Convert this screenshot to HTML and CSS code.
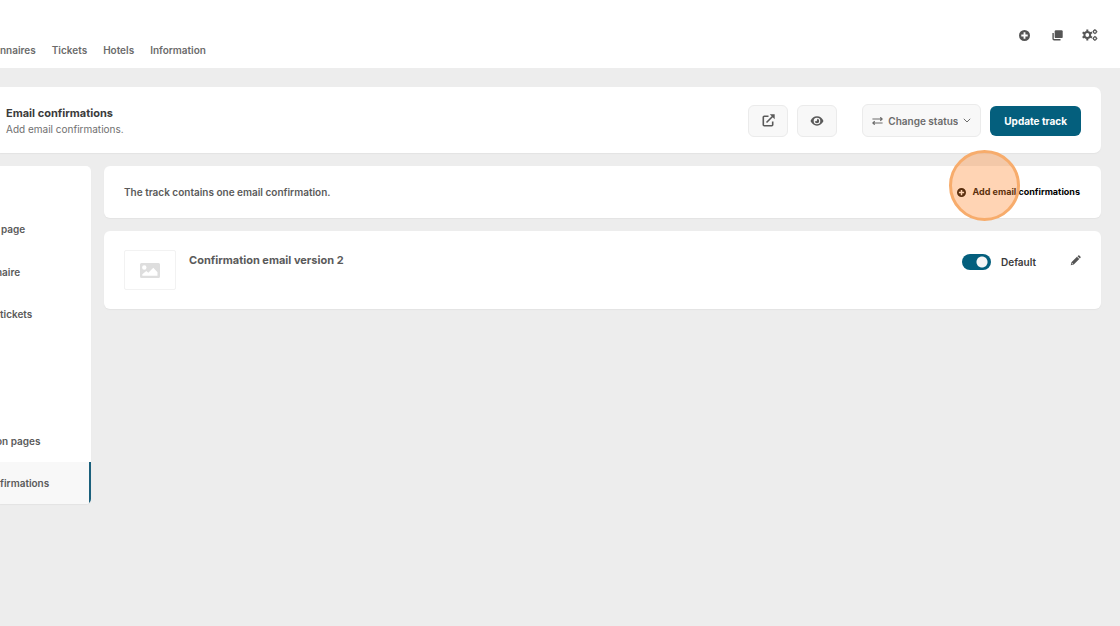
FILE: index.html
```html
<!DOCTYPE html>
<html lang="en">
<head>
<meta charset="utf-8">
<meta name="viewport" content="width=device-width, initial-scale=1">
<title>Email confirmations</title>
<link rel="stylesheet" href="styles.css">
</head>
<body>
<header class="topbar">
  <nav class="topnav" aria-label="Main">
    <a href="#">nnaires</a>
    <a href="#">Tickets</a>
    <a href="#">Hotels</a>
    <a href="#">Information</a>
  </nav>
  <div class="tools">
    <button class="icon-button" type="button" aria-label="Add">
      <svg width="11" height="11" viewBox="0 0 12 12"><path fill="currentColor" fill-rule="evenodd" d="M6 0a6 6 0 1 1 0 12A6 6 0 0 1 6 0ZM5 2.500V5H2.500v2H5v2.500h2V7h2.500V5H7V2.500Z"/></svg>
    </button>
    <button class="icon-button" type="button" aria-label="Copies">
      <svg width="11" height="11" viewBox="0 0 11 11"><rect x="2.700" y="0.300" width="8" height="7.800" rx="1.200" fill="currentColor"/><path d="M1.100 3v5.800q0 1 1 1H8.500" fill="none" stroke="currentColor" stroke-width="1.400"/></svg>
    </button>
    <button class="icon-button" type="button" aria-label="Settings">
      <svg width="16" height="12" viewBox="0 0 16 12"><g fill="none" stroke="currentColor"><circle cx="5.300" cy="6" r="2.900" stroke-width="2"/><path stroke-width="2" d="M5.300.6v2M5.300 9.400v2M.6 3.300l1.800 1M8.200 7.700l1.800 1M.6 8.700l1.800-1M8.200 4.300l1.800-1"/><circle cx="12.900" cy="2.700" r="1.500" stroke-width="1.300"/><circle cx="12.900" cy="9.400" r="1.500" stroke-width="1.300"/><path stroke-width="1" d="M12.900.2v1M12.900 4.200v1M10.600 2.700h1M14.400 2.700h1M12.900 6.900v1M12.900 10.900v1M10.600 9.400h1M14.400 9.400h1"/></g></svg>
    </button>
  </div>
</header>

<section class="page-head">
  <div>
    <h1 class="page-title">Email confirmations</h1>
    <p class="page-text">Add email confirmations.</p>
  </div>
  <div class="actions">
    <button class="square-button" type="button" aria-label="Open in new window">
      <svg width="13" height="13" viewBox="0 0 13 13"><g fill="none" stroke="currentColor" stroke-width="1.600"><path d="M6.500 2.300H2.300q-1 0-1 1v7.400q0 1 1 1h7.400q1 0 1-1V7.500"/><path d="M4.500 8.500l6.500-6.500"/></g><path fill="currentColor" d="M7.800.3h4.900v4.900Z"/></svg>
    </button>
    <button class="square-button" type="button" aria-label="Preview">
      <svg width="14" height="10" viewBox="0 0 14 10"><path fill="currentColor" fill-rule="evenodd" d="M7 .3C10 .3 12.300 2.300 13.500 5 12.300 7.700 10 9.700 7 9.700S1.700 7.700.5 5C1.700 2.300 4 .3 7 .3ZM7 1.700a3.300 3.300 0 1 0 0 6.600 3.300 3.300 0 0 0 0-6.600Z"/><path fill="currentColor" d="M7 2.800A2.200 2.200 0 1 1 4.800 5 1.600 1.600 0 0 0 7 2.800Z"/></svg>
    </button>
    <div class="status">
      <svg width="11" height="8" viewBox="0 0 11 8"><path fill="none" stroke="currentColor" stroke-width="1.200" d="M.4 2h9.500M8.300.3 10.100 2 8.300 3.700M10.600 6H1.100M2.700 4.300.9 6l1.800 1.700"/></svg>
      <select class="status-select" aria-label="Change status"><option>Change status</option></select>
      <svg width="8" height="5" viewBox="0 0 8 5"><path fill="none" stroke="currentColor" stroke-width="1" d="M.8.8 4 4 7.200.8"/></svg>
    </div>
    <button class="primary" type="button">Update track</button>
  </div>
</section>

<div class="layout">
  <nav class="sidebar" aria-label="Track">
    <a class="side-link side-landing" href="#">page</a>
    <a class="side-link side-form" href="#">naire</a>
    <a class="side-link side-tickets" href="#">tickets</a>
    <a class="side-link side-pages" href="#">on pages</a>
    <a class="side-link side-active" href="#" aria-current="page">firmations</a>
  </nav>
  <main class="content">
    <section class="card summary">
      <p>The track contains one email confirmation.</p>
      <div class="add-wrap">
        <button class="add" type="button">
          <svg width="9" height="9" viewBox="0 0 12 12"><path fill="currentColor" fill-rule="evenodd" d="M6 0a6 6 0 1 1 0 12A6 6 0 0 1 6 0ZM5 2.500V5H2.500v2H5v2.500h2V7h2.500V5H7V2.500Z"/></svg>
          Add email confirmations
        </button>
        <span class="highlight"></span>
      </div>
    </section>
    <section class="card item">
      <div class="thumb">
        <svg width="20" height="15" viewBox="0 0 20 15"><path fill="currentColor" fill-rule="evenodd" d="M1.500 0h17A1.500 1.500 0 0 1 20 1.500v12a1.500 1.500 0 0 1-1.500 1.500h-17A1.500 1.500 0 0 1 0 13.500v-12A1.500 1.500 0 0 1 1.500 0ZM4.300 2.300a2.200 2.200 0 1 0 0 4.400 2.200 2.200 0 0 0 0-4.400ZM2.300 12.700h15.200V9.200l-4.200-4.500-5 5-2-1.700-4 3.300Z"/></svg>
      </div>
      <h2 class="item-title">Confirmation email version 2</h2>
      <div class="item-controls">
        <label class="switch-label"><input class="switch" type="checkbox" role="switch" checked>Default</label>
        <button class="icon-button" type="button" aria-label="Edit">
          <svg width="11" height="11" viewBox="0 0 12 12"><path fill="currentColor" fill-rule="evenodd" d="M8.200 1.300l.8-.8q.6-.4 1.200 0l1.300 1.300q.4.600 0 1.200l-.8.8ZM7.600 1.900l2.500 2.500-6 6L.8 11.200l.8-3.300ZM2.200 8.600l-.3 1.500 1.500-.3Z"/></svg>
        </button>
      </div>
    </section>
  </main>
</div>
</body>
</html>
```
FILE: styles.css
```css
* { box-sizing: border-box; }

body {
  margin: 0;
  min-height: 100vh;
  overflow-x: hidden;
  background: #ededed;
  color: #5a5a5a;
  font: 600 10px/16px Inter, "Liberation Sans", sans-serif;
}

h1, h2, p { margin: 0; }
a { color: inherit; text-decoration: none; }
button, select { font: inherit; color: inherit; }
svg { display: block; flex: none; }

.topbar {
  display: flex;
  justify-content: space-between;
  height: 68px;
  padding-right: 20px;
  background: #fff;
}

.topnav {
  display: flex;
  align-items: flex-end;
  gap: 16px;
  padding-bottom: 10px;
  color: #6b6b6b;
}

.tools {
  display: flex;
  align-items: flex-start;
  gap: 13px;
  padding-top: 25px;
}

.icon-button {
  display: grid;
  place-items: center;
  min-width: 20px;
  height: 20px;
  padding: 0;
  border: 0;
  background: none;
  color: #555;
}

.page-head {
  display: flex;
  justify-content: space-between;
  align-items: center;
  margin: 19px 19px 13px 0;
  padding: 17px 20px 16px 6px;
  background: #fff;
  border-radius: 0 7px 7px 0;
  box-shadow: 0 1px 1px #e3e3e3;
}

.page-title {
  color: #3b3b3b;
  font-size: 11px;
  font-weight: 700;
}

.page-text {
  color: #707070;
  font-size: 10px;
  font-weight: 400;
}

.actions { display: flex; align-items: center; }

.square-button {
  display: grid;
  place-items: center;
  width: 40px;
  height: 32px;
  margin-right: 9px;
  padding: 0;
  border: 1px solid #ebebeb;
  border-radius: 6px;
  background: #f8f8f8;
}

.status {
  display: flex;
  align-items: center;
  gap: 5px;
  height: 33px;
  margin: 0 9px 0 16px;
  padding: 0 9px;
  border: 1px solid #ebebeb;
  border-radius: 6px;
  background: #f8f8f8;
  color: #6b6b6b;
}

.status-select {
  appearance: none;
  padding: 0;
  border: 0;
  background: none;
}

.primary {
  height: 30px;
  padding: 0 14px;
  border: 0;
  border-radius: 6px;
  background: #045f7d;
  color: #fff;
  font-weight: 700;
}

.layout {
  display: flex;
  align-items: flex-start;
  gap: 13px;
  padding-right: 19px;
}

.sidebar {
  display: grid;
  grid-template-rows: repeat(8, 1fr);
  flex: 0 0 91px;
  min-height: 338px;
  overflow: hidden;
  background: #fff;
  border-radius: 0 5px 5px 0;
  box-shadow: 0 1px 1px #e3e3e3;
}

.side-link { display: flex; align-items: center; }
.side-landing { grid-row: 2; padding-left: 1px; }
.side-form { grid-row: 3; text-indent: -4px; }
.side-tickets { grid-row: 4; }
.side-pages { grid-row: 7; text-indent: -4px; }
.side-active {
  grid-row: 8;
  background: #f8f8f8;
  border-right: 2px solid #1b607c;
}

.content {
  display: grid;
  flex: 1;
  gap: 13px;
  min-width: 0;
}

.card {
  display: flex;
  padding: 18px 21px 18px 20px;
  background: #fff;
  border-radius: 6px;
  box-shadow: 0 1px 1px #e3e3e3;
}

.summary { justify-content: space-between; align-items: center; }
.add-wrap { position: relative; }

.add {
  display: flex;
  align-items: center;
  gap: 7px;
  padding: 0;
  border: 0;
  background: none;
  color: #000;
  font-size: 9px;
  font-weight: 700;
}

.highlight {
  position: absolute;
  top: -34px;
  left: -8px;
  width: 71px;
  height: 71px;
  border: 3px solid #f7ac6c;
  border-radius: 50%;
  background: rgba(255, 133, 40, 0.35);
  pointer-events: none;
}

.item { align-items: flex-start; gap: 13px; padding: 19px 16px 19px 20px; }

.thumb {
  display: grid;
  place-items: center;
  width: 52px;
  height: 40px;
  border: 1px solid #f2f2f2;
  border-radius: 2px;
  color: #dedede;
}

.item-title {
  padding-top: 2px;
  font-size: 11px;
  font-weight: 700;
}

.item-controls {
  display: flex;
  gap: 29px;
  margin-left: auto;
}

.switch-label {
  display: flex;
  align-items: center;
  gap: 10px;
  height: 24px;
  color: #3b3b3b;
}

.switch {
  appearance: none;
  width: 29px;
  height: 16px;
  margin: 0;
  border-radius: 8px;
  background: radial-gradient(circle at 20px 8px, #f6f6f6 5px, #045f7d 6px);
}
```
